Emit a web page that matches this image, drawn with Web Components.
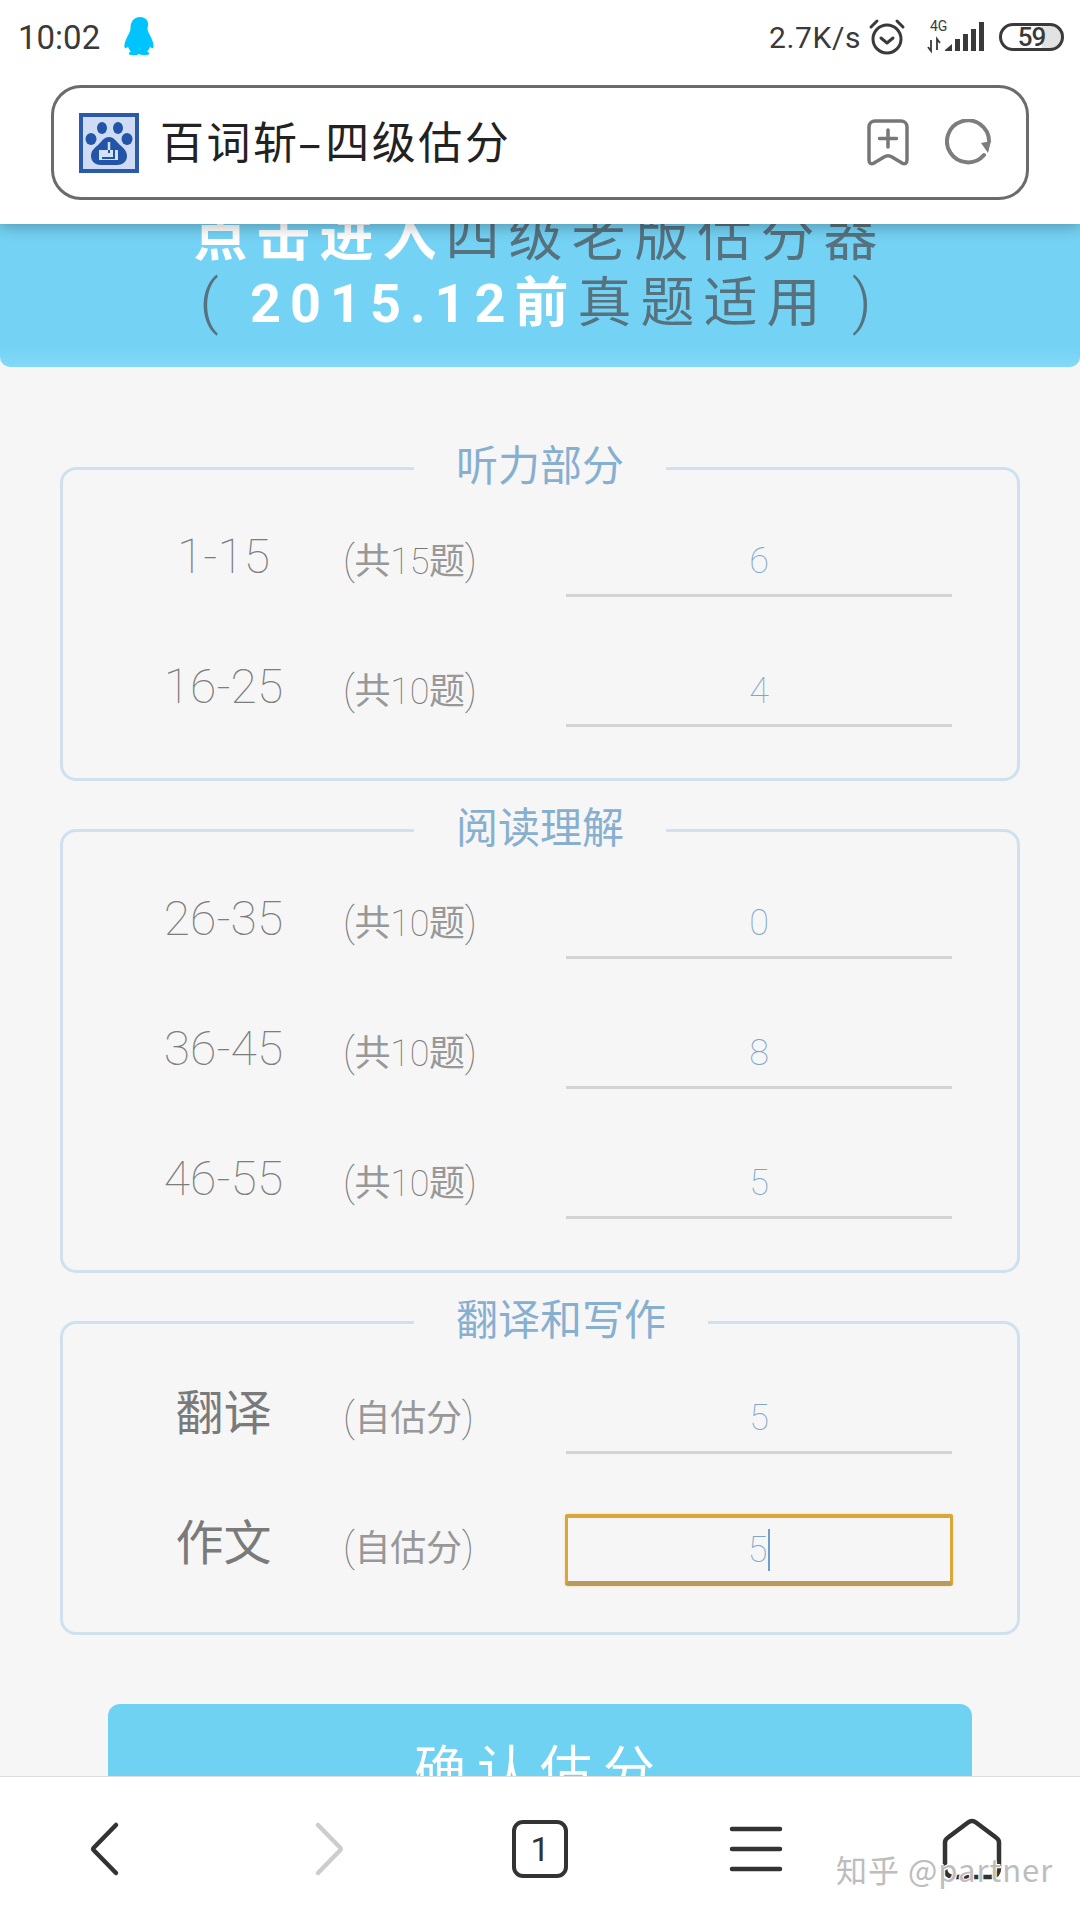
<!DOCTYPE html>
<html lang="zh">
<head>
<meta charset="utf-8">
<title>百词斩-四级估分</title>
<style>
  html, body { margin: 0; padding: 0; }
  body { width: 1080px; height: 1920px; overflow: hidden; background: #f6f6f6; font-family: Roboto, "Noto Sans CJK SC", sans-serif; }
  #app { display: flex; flex-direction: column; height: 1920px; }
</style>
</head>
<body>
<div id="app">
  <top-bar></top-bar>
  <score-page>
    <score-banner></score-banner>
    <score-group legend="听力部分">
      <score-row label="1-15" hint="共15题" value="6"></score-row>
      <score-row label="16-25" hint="共10题" value="4"></score-row>
    </score-group>
    <score-group legend="阅读理解">
      <score-row label="26-35" hint="共10题" value="0"></score-row>
      <score-row label="36-45" hint="共10题" value="8"></score-row>
      <score-row label="46-55" hint="共10题" value="5"></score-row>
    </score-group>
    <score-group legend="翻译和写作">
      <score-row label="翻译" hint="自估分" value="5" cjk></score-row>
      <score-row label="作文" hint="自估分" value="5" cjk focused></score-row>
    </score-group>
    <submit-button>确认估分</submit-button>
  </score-page>
  <nav-bar></nav-bar>
</div>

<script>
"use strict";
(() => {
  const CJK = `"Noto Sans CJK SC", sans-serif`;

  customElements.define("top-bar", class extends HTMLElement {
    constructor() {
      super();
      this.attachShadow({mode: "open"}).innerHTML = `
        <style>
          :host {
            display: block;
            flex: none;
            height: 224px;
            background: #fff;
            box-shadow: 0 3px 14px rgba(0,0,0,0.28);
            position: relative;
            z-index: 2;
            font-family: Roboto, ${CJK};
            color: #3a3a3a;
          }
          #status {
            display: flex;
            align-items: center;
            height: 74px;
            padding: 0 16px 0 18px;
            font-size: 30px;
          }
          #time { font-size: 33px; margin-right: 23px; }
          #penguin { width: 34px; height: 40px; margin-top: -2px; }
          #speed { margin-left: auto; margin-right: 7px; letter-spacing: 0.6px; }
          #alarm { width: 38px; height: 38px; margin-right: 19px; }
          #signal { position: relative; width: 60px; height: 32px; margin-right: 14px; }
          #signal span { position: absolute; left: 5px; top: -3px; font-size: 14px; line-height: 16px; }
          #signal svg { position: absolute; left: 0; top: 0; }
          #battery {
            box-sizing: border-box;
            width: 65px;
            height: 28px;
            border: 3px solid #3a3a3a;
            border-radius: 14px;
            background: linear-gradient(90deg, #fff 68%, #e2e2e2 68%);
            font-size: 26px;
            line-height: 22px;
            font-weight: 500;
            letter-spacing: -1px;
            text-align: center;
          }
          #url-box {
            box-sizing: border-box;
            display: flex;
            align-items: center;
            margin: 11px 51px 0 51px;
            height: 115px;
            padding: 0 33px 0 25px;
            border: 3px solid #6b6b6b;
            border-radius: 30px;
          }
          #favicon { width: 60px; height: 60px; flex: none; }
          #title {
            margin: -5px 0 0 21px;
            font-family: ${CJK};
            font-size: 44px;
            letter-spacing: 2.500px;
            color: #222;
          }
          #title b { display: inline-block; margin: 0 5px 0 3px; font-weight: 400; transform: scaleX(1.7); }
          #bookmark { margin-left: auto; width: 42px; height: 48px; }
          #reload { margin-left: 36px; width: 48px; height: 48px; }
        </style>
        <div id="status">
          <span id="time">10:02</span>
          <svg id="penguin" viewBox="0 0 34 40">
            <path fill="#00c4ff" d="M17 1c-6.500 0-9.500 5-9.500 11 0 2-.4 3.400-1.500 5.500C3.500 22 1 27 1.500 31c.3 2 2 1.500 3.500-.5.500 2 1.500 3.800 3 5-2.300.8-3 2.500-1 3.200 3 .8 7 .6 9-.7 2 1.300 6 1.500 9 .7 2-.7 1.300-2.400-1-3.200 1.500-1.200 2.500-3 3-5 1.500 2 3.200 2.500 3.500.5.500-4-2-9-4.500-13.500-1.100-2.100-1.500-3.500-1.500-5.500C26.500 6 23.500 1 17 1z"/>
          </svg>
          <span id="speed">2.7K/s</span>
          <svg id="alarm" viewBox="0 0 38 38" fill="none" stroke="#3a3a3a" stroke-width="3" stroke-linecap="round" stroke-linejoin="round">
            <circle cx="19" cy="21" r="14"/>
            <path d="M13 20l6 5 6-5"/>
            <path d="M3 9l6-6M35 9l-6-6"/>
          </svg>
          <div id="signal">
            <span>4G</span>
            <svg width="60" height="32" viewBox="0 0 60 32" fill="#3a3a3a">
              <path d="M6 19v10M3 26l3 4V19M12 29V18l3 4" fill="none" stroke="#3a3a3a" stroke-width="1.800"/>
              <path d="M20 29l7-6v7h-7z"/>
              <rect x="30" y="18" width="5" height="12"/>
              <rect x="38" y="13" width="5" height="17"/>
              <rect x="46" y="8" width="5" height="22"/>
              <rect x="54" y="1" width="5" height="29"/>
            </svg>
          </div>
          <div id="battery">59</div>
        </div>
        <div id="url-box">
          <svg id="favicon" viewBox="0 0 60 60">
            <rect width="60" height="60" fill="#2a5aa8"/>
            <rect x="4" y="4" width="52" height="52" fill="#cfdcf3"/>
            <g fill="#2255a8">
              <ellipse cx="23" cy="15" rx="5" ry="6"/>
              <ellipse cx="39" cy="15" rx="5" ry="6"/>
              <ellipse cx="12" cy="26" rx="5.500" ry="6"/>
              <ellipse cx="48" cy="26" rx="5.500" ry="6"/>
              <path d="M30 24c-5 0-7 4-10 7-3 3-8 6-8 12 0 6 5 9 10 9h16c5 0 10-3 10-9 0-6-5-9-8-12-3-3-5-7-10-7z"/>
            </g>
            <rect x="20" y="37" width="19" height="10" fill="#d5e1f5"/>
            <path d="M30 29v11M35 36v9H23" fill="none" stroke="#2255a8" stroke-width="2"/>
            <path d="M30 29v8" fill="none" stroke="#d5e1f5" stroke-width="2.500"/>
          </svg>
          <span id="title">百词斩<b>-</b>四级估分</span>
          <svg id="bookmark" viewBox="0 0 42 48" fill="none" stroke="#777" stroke-width="3.500" stroke-linecap="round" stroke-linejoin="round">
            <path d="M8 2h26c3 0 6 2 6 6v33c0 3-2 5-5 3l-10-6c-3-2-5-2-8 0L7 44c-3 2-5 0-5-3V8c0-4 3-6 6-6z"/>
            <path d="M21 11v17M12.500 19.500h17"/>
          </svg>
          <svg id="reload" viewBox="0 0 48 48" fill="none" stroke="#7d7d7d" stroke-width="4" stroke-linecap="round">
            <path d="M39 36a21 21 0 1 1 5-14"/>
            <path d="M36 24l10-2-3 12z" fill="#7d7d7d" stroke="none"/>
          </svg>
        </div>
      `;
    }
  });

  customElements.define("score-page", class extends HTMLElement {
    constructor() {
      super();
      this.attachShadow({mode: "open"}).innerHTML = `
        <style>
          :host {
            display: block;
            flex: 1;
            min-height: 0;
            overflow: hidden;
            background: #f6f6f6;
          }
        </style>
        <slot></slot>
      `;
    }
  });

  customElements.define("score-banner", class extends HTMLElement {
    constructor() {
      super();
      this.attachShadow({mode: "open"}).innerHTML = `
        <style>
          :host {
            display: block;
            margin: -22px 0 71px 0;
            padding: 3px 0 30px 0;
            background: linear-gradient(180deg, #74d2f4 0, #74d2f4 88%, #82d9f8 100%);
            border-radius: 0 0 10px 10px;
            font-family: Roboto, ${CJK};
            font-size: 54px;
            line-height: 66px;
            letter-spacing: 9px;
            text-align: center;
            white-space: nowrap;
            color: #56727f;
          }
          b { color: #fff; font-weight: 700; }
          span { font-weight: 400; }
          i { font-style: normal; font-weight: 300; font-size: 60px; line-height: 50px; }
        </style>
        <div><b>点击进入</b><span>四级老版估分器</span></div>
        <div><i>(</i> <b>2015.12前</b><span>真题适用</span> <i>)</i></div>
      `;
    }
  });

  customElements.define("score-group", class extends HTMLElement {
    constructor() {
      super();
      this.attachShadow({mode: "open"}).innerHTML = `
        <style>
          :host {
            display: block;
            margin: 19px 60px 0 60px;
            font-family: Roboto, ${CJK};
          }
          fieldset {
            margin: 0;
            padding: 29px 0 51px 0;
            min-width: 0;
            border: 3px solid #cfe0ef;
            border-radius: 16px;
          }
          legend {
            margin-left: 351px;
            padding: 0 42px 10px 42px;
            font-family: ${CJK};
            font-size: 42px;
            line-height: 50px;
            color: #87afd0;
          }
          #rows {
            display: flex;
            flex-direction: column;
            gap: 60px;
          }
        </style>
        <fieldset>
          <legend id="legend"></legend>
          <div id="rows"><slot></slot></div>
        </fieldset>
      `;
      this.shadowRoot.getElementById("legend").textContent = this.getAttribute("legend");
    }
  });

  customElements.define("score-row", class extends HTMLElement {
    constructor() {
      super();
      this.attachShadow({mode: "open"}).innerHTML = `
        <style>
          :host {
            display: grid;
            grid-template-columns: 239px 223px 386px;
            align-items: center;
            height: 70px;
            padding-left: 41px;
          }
          #label {
            text-align: center;
            padding-bottom: 10px;
            font-family: Roboto, ${CJK};
            font-weight: 100;
            font-size: 48px;
            line-height: 56px;
            color: #7d7d7d;
          }
          :host([cjk]) #label {
            padding-bottom: 20px;
            font-family: ${CJK};
            font-weight: 400;
            color: #7a7a7a;
          }
          #hint {
            padding-bottom: 5px;
            font-family: ${CJK};
            font-size: 36px;
            line-height: 50px;
            letter-spacing: -0.300px;
            color: #989898;
            white-space: nowrap;
          }
          #hint i { font-family: Roboto, sans-serif; font-style: normal; font-weight: 100; color: #777; }
          #hint u { font-family: Roboto, sans-serif; text-decoration: none; font-weight: 100; font-size: 40px; color: #777; }
          #value {
            box-sizing: border-box;
            height: 70px;
            border-bottom: 3px solid #d4d4d4;
            display: flex;
            align-items: center;
            justify-content: center;
            font-family: Roboto, sans-serif;
            font-weight: 100;
            font-size: 36px;
            color: #7ea6cc;
          }
          :host([focused]) #value {
            height: 72px;
            margin: 0 -1px -2px -1px;
            border: 3px solid #d9a63c;
            border-top-width: 4px;
            border-bottom: 5px solid #b89a5c;
            border-radius: 3px;
            box-shadow: 0 0 3px #f7dd9c;
          }
          #caret { display: none; width: 2px; height: 42px; margin-left: 1px; background: #6e9fc8; }
          :host([focused]) #caret { display: block; }
        </style>
        <div id="label"></div>
        <div id="hint"></div>
        <div id="value"><span id="num"></span><span id="caret"></span></div>
      `;
      this.shadowRoot.getElementById("label").textContent = this.getAttribute("label");
      // digits and brackets in the hint are a thin latin face, the rest stays CJK
      const hint = this.getAttribute("hint").replace(/\d+/, "<i>$&</i>");
      this.shadowRoot.getElementById("hint").innerHTML = `<u>(</u>${hint}<u>)</u>`;
      this.shadowRoot.getElementById("num").textContent = this.getAttribute("value");
    }
  });

  customElements.define("submit-button", class extends HTMLElement {
    constructor() {
      super();
      this.attachShadow({mode: "open"}).innerHTML = `
        <style>
          :host {
            display: block;
            margin: 69px 108px 0 108px;
            height: 132px;
            background: #70d2f2;
            border-radius: 12px;
            font-family: ${CJK};
            font-size: 52px;
            line-height: 126px;
            letter-spacing: 11px;
            text-align: center;
            color: #fff;
          }
        </style>
        <slot></slot>
      `;
    }
  });

  customElements.define("nav-bar", class extends HTMLElement {
    constructor() {
      super();
      this.attachShadow({mode: "open"}).innerHTML = `
        <style>
          :host {
            display: grid;
            grid-template-columns: repeat(5, 216px);
            align-items: center;
            justify-items: center;
            flex: none;
            box-sizing: border-box;
            height: 144px;
            background: #fff;
            border-top: 1px solid #dedede;
            position: relative;
            z-index: 2;
          }
          svg { display: block; }
          #tabs {
            box-sizing: border-box;
            width: 56px;
            height: 58px;
            border: 4px solid #333;
            border-radius: 11px;
            font-family: Roboto, sans-serif;
            font-size: 34px;
            line-height: 50px;
            text-align: center;
            color: #333;
          }
          #mark {
            position: absolute;
            left: 836px;
            top: 70px;
            font-family: ${CJK};
            font-size: 31px;
            line-height: 44px;
            letter-spacing: 1px;
            color: #bdbdbd;
            text-shadow: 1px 1px 0 #fff, -1px 0 0 #fff, 0 -1px 0 #fff;
            white-space: nowrap;
          }
        </style>
        <svg width="60" height="60" viewBox="0 0 60 60" fill="none" stroke="#333" stroke-width="4.500" stroke-linecap="round" stroke-linejoin="round" style="margin-left:-4px">
          <path d="M40 6L18 28.500q-1.500 1.500 0 3L40 54"/>
        </svg>
        <svg width="60" height="60" viewBox="0 0 60 60" fill="none" stroke="#cdcdcd" stroke-width="4.500" stroke-linecap="round" stroke-linejoin="round" style="margin-left:8px">
          <path d="M20 6l22 22.500q1.500 1.500 0 3L20 54"/>
        </svg>
        <div id="tabs">1</div>
        <svg width="60" height="60" viewBox="0 0 60 60" fill="none" stroke="#333" stroke-width="4.500" stroke-linecap="round">
          <path d="M6 10h48M6 30h48M6 50h48"/>
        </svg>
        <svg width="62" height="62" viewBox="0 0 62 62" fill="none" stroke="#333" stroke-width="4.500" stroke-linecap="round" stroke-linejoin="round">
          <path d="M31 3q2 0 4 1.500l20 15q3 2 3 5V50q0 8-8 9H12q-8-1-8-9V24.500q0-3 3-5l20-15q2-1.500 4-1.500z"/>
        </svg>
        <span id="mark">知乎 @partner</span>
      `;
    }
  });
})();
</script>
</body>
</html>
